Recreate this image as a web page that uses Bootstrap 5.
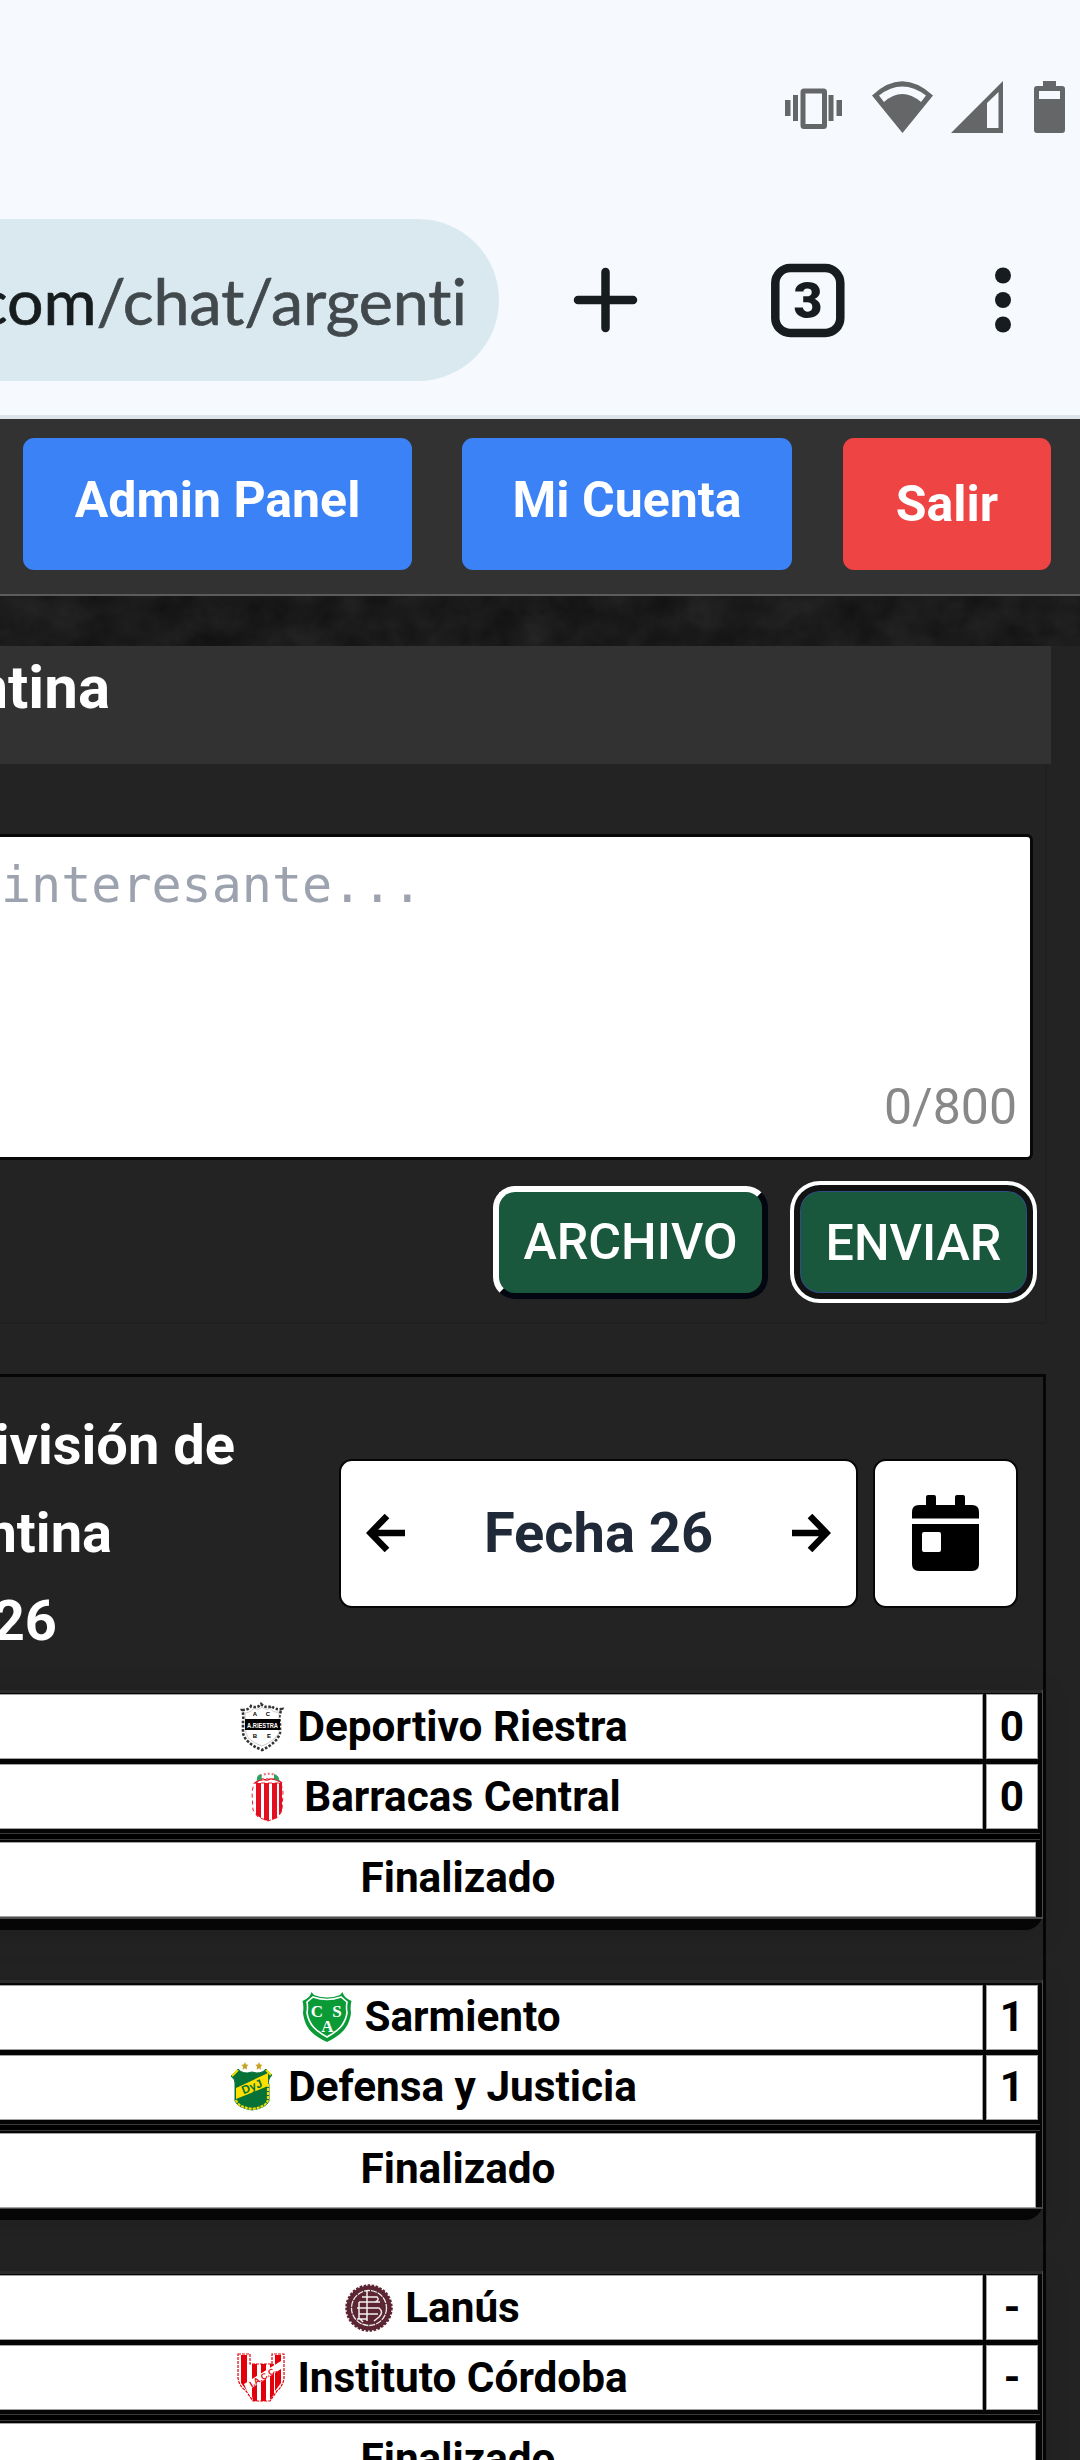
<!DOCTYPE html>
<html lang="es">
<head>
<meta charset="utf-8">
<meta name="viewport" content="width=device-width, initial-scale=1">
<title>Chat Argentina</title>
<link href="https://cdn.jsdelivr.net/npm/bootstrap@5.3.0/dist/css/bootstrap.min.css" rel="stylesheet">
<style>
body{width:1080px;height:2460px;overflow:hidden;background:#232323;font-family:Roboto,"Noto Sans",sans-serif;font-size:50px;line-height:1}
svg{display:block;flex:none}
/* browser chrome */
.chrome{height:418.5px;background:#f6f9fe;border-bottom:4.5px solid #dce3e9}
.status-icons{height:219px;padding:81px 15px 0 0;color:#646667}
.ico-vibrate{margin:7px 30px 0 0}
.ico-wifi{margin-right:18px}
.ico-signal{margin-right:31px}
.toolbar{height:162px}
.omnibox{width:499px;background:#dae8f0;border-radius:0 81px 81px 0}
.url{width:467px;overflow:hidden;white-space:nowrap;font:64.5px/80px Lato,sans-serif;font-variant-ligatures:none;color:#41494d;-webkit-text-stroke:.7px currentColor}
.url span{display:inline-block;margin-left:-38.500px}
.url b{font-weight:400;color:#171c1f}
.ico-plus{margin-left:74px}
.ico-tabs{margin-left:132px}
.ico-more{margin-left:150px}
/* top navigation */
.topnav{height:177px;background:#323232;border-bottom:2px solid #5c5c5c;padding:19.500px 29px 0 23px}
.topnav .btn{height:131.500px;border:0;border-radius:11px;font-size:50px;font-weight:700;line-height:1;color:#fff;padding:0}
.topnav .btn-panel,.topnav .btn-cuenta{background:#3b82f6;padding-bottom:8px}
.btn-panel{width:389px}
.btn-cuenta{width:330px;margin-left:50px}
.topnav .btn-salir{width:208px;margin-left:51px;background:#ef4444}
.texture{height:49.500px;background:#1a1a1a}
.clip{display:flex;justify-content:flex-end;white-space:nowrap;overflow:hidden}
.chat-title{width:1051px;height:119px;background:#323232;color:#fff;font-size:60px;font-weight:700;line-height:86px}
.chat-title .clip{width:110px}
/* composer */
.composer{width:1047px;height:560px;padding-top:70px;border-right:2px solid #202020;border-bottom:2px solid #1f1f1f}
.editor{width:1033px;height:326px;background:#fff;border:3px solid #080808;border-left:0;border-radius:0 6px 6px 0}
.editor .ph{font-family:"DejaVu Sans Mono",monospace;font-size:50px;line-height:60px;color:#9ca3af;padding-top:18px;margin-left:1px;white-space:nowrap}
.editor .count{color:#888;font-size:50px;line-height:60px;padding:0 13px 20px 0}
.actions{padding:21px 8px 0 0}
.actions .btn{background:#19583d;color:#fff;font-size:50.200px;font-weight:500;line-height:1;padding:0;white-space:nowrap}
.actions .btn-archivo{width:275px;height:113px;border:6px solid;border-color:#fff #030712 #030712 #fff;border-radius:22px;margin:5px 22px 0 0}
.actions .btn-enviar{width:247px;height:122px;border:4px solid #fff;border-radius:30px;box-shadow:inset 0 0 0 6px #121212,inset 0 0 0 7px #2e4f86;padding-top:2px}
/* fixtures */
.fixtures{width:1046px;height:1100px;margin-top:50px;border:3px solid #060606;border-left:0;border-bottom:0}
.fix-head{height:312.500px;padding-right:25px}
.fix-title{width:339px;color:#fff;font-size:56px;font-weight:700;line-height:88px}
.line-a{width:235px}
.line-b{width:112px}
.line-c{width:57px}
.box-white{height:149px;background:#fff;border:2px solid #060606;border-radius:13px}
.box-round{width:519px;padding:0 25px;color:#1f2937;font-size:56px;font-weight:700}
.box-cal{width:145px;margin-left:15px}
.match{width:1163px;margin-left:-120px;margin-bottom:50.500px;height:240px;background:#060606;border-radius:0 0 18px 0;color:#000;font-size:42.300px;font-weight:700;line-height:46px;box-shadow:0 5px 30px rgba(0,0,0,.13)}
.match-grid{height:229px;padding:2px 2px 0 0;border:1px solid #4c4c4c;border-width:0 1px 2px 0;background:#050505;box-shadow:inset 0 4px 0 -1px #2b2b2b}
.team-row{height:65px;margin-bottom:5px;padding-right:2px}
.team-row:first-child{margin-top:2.500px}
.cell{background:#fff;border:1px solid #a2a2a2;display:flex;align-items:center;justify-content:center}
.cell-team{flex:1;gap:12px;margin-right:3px}
.cell-score{width:52px}
.sep{height:7px;background:#000;border:1px solid #3a3a3a;border-width:1px 0;margin-top:-1px}
.cell-state{height:75px;margin:2px 4px 0 0;padding-bottom:3px}
</style>
</head>
<body>
<header class="chrome">
  <div class="status-icons d-flex justify-content-end">
    <svg class="ico-vibrate" width="57" height="41" fill="currentColor"><path d="M0 12h5.500v16H0zM8 7h5v26H8zM43.500 7h5v26h-5zM51.500 12H57v16h-5.500z"/><rect x="18" y="3" width="21.500" height="35.500" rx="1" fill="none" stroke="currentColor" stroke-width="5"/></svg>
    <svg class="ico-wifi" width="61" height="52" fill="currentColor"><path fill-rule="evenodd" d="M0 14.500Q30-14 61 14.500L30.500 52zM7 14.500 12 21Q30 5 49 21L54 14.500Q30-3.500 7 14.500z"/></svg>
    <svg class="ico-signal" width="52" height="52" fill="currentColor"><path fill-rule="evenodd" d="M0 52 52 0V52zM36 22V47H47.500V11z"/></svg>
    <svg width="31" height="52" fill="currentColor"><path fill-rule="evenodd" d="M9 0H22V5H28Q31 5 31 8V49Q31 52 28 52H3Q0 52 0 49V8Q0 5 3 5H9zM5 10V18H26V10z"/></svg>
  </div>
  <div class="toolbar d-flex align-items-center">
    <div class="omnibox h-100 d-flex align-items-center"><div class="url"><span><b>.com</b>/chat/argenti</span></div></div>
    <svg class="ico-plus" width="66" height="66" stroke="#171c1f" stroke-width="8.500" stroke-linecap="round"><path d="M32.500 5V61M5 33H60"/></svg>
    <svg class="ico-tabs" width="74" height="75"><rect x="4.300" y="5" width="65" height="65" rx="15" fill="none" stroke="#171c1f" stroke-width="8.500"/><text x="37" y="55" text-anchor="middle" font-family="Roboto" font-weight="900" font-size="50" fill="#171c1f">3</text></svg>
    <svg class="ico-more" width="16" height="66" fill="#171c1f"><circle cx="8" cy="8.500" r="8"/><circle cx="8" cy="33" r="8"/><circle cx="8" cy="57.500" r="8"/></svg>
  </div>
</header>

<nav class="topnav d-flex">
  <a class="btn btn-panel d-flex align-items-center justify-content-center">Admin Panel</a>
  <a class="btn btn-cuenta d-flex align-items-center justify-content-center">Mi Cuenta</a>
  <a class="btn btn-salir d-flex align-items-center justify-content-center">Salir</a>
</nav>
<div class="texture">
  <svg width="1080" height="50"><filter id="grain" x="0" y="0" width="100%" height="100%" color-interpolation-filters="sRGB"><feTurbulence type="fractalNoise" baseFrequency=".025 .03" numOctaves="4" seed="8"/><feColorMatrix values=".1 0 0 0 .055 .1 0 0 0 .055 .1 0 0 0 .055 0 0 0 0 1"/></filter><rect width="1080" height="50" filter="url(#grain)"/></svg>
</div>

<main>
  <h1 class="chat-title m-0"><span class="clip">ntina</span></h1>
  <section class="composer">
    <div class="editor d-flex flex-column justify-content-between">
      <div class="ph">interesante...</div>
      <div class="count text-end">0/800</div>
    </div>
    <div class="actions d-flex justify-content-end">
      <button class="btn btn-archivo">ARCHIVO</button>
      <button class="btn btn-enviar">ENVIAR</button>
    </div>
  </section>

  <section class="fixtures">
    <div class="fix-head d-flex align-items-center">
      <div class="fix-title">
        <div class="clip line-a">ivisión de</div>
        <div class="clip line-b">ntina</div>
        <div class="clip line-c">26</div>
      </div>
      <div class="box-white box-round d-flex align-items-center justify-content-between">
        <svg width="39" height="38" fill="none" stroke="#000" stroke-width="6.500"><path d="M21 2 4.500 19 21 36M4.500 19H39"/></svg>
        <span>Fecha 26</span>
        <svg width="39" height="38" fill="none" stroke="#000" stroke-width="6.500"><path d="M18 2 34.500 19 18 36M34.500 19H0"/></svg>
      </div>
      <div class="box-white box-cal d-flex align-items-center justify-content-center">
        <svg width="67" height="76"><path fill-rule="evenodd" d="M14 10V2q0-2 2-2h6q2 0 2 2V10H43V2q0-2 2-2h6q2 0 2 2V10H60Q67 10 67 17V23.500H0V17Q0 10 7 10zM0 29H67V69Q67 76 60 76H7Q0 76 0 69zM12 37Q10 37 10 39V55Q10 57 12 57H27Q29 57 29 55V39Q29 37 27 37z"/></svg>
      </div>
    </div>

    <article class="match"><div class="match-grid">
      <div class="team-row d-flex">
        <div class="cell cell-team">
          <svg width="50" height="50" viewBox="0 0 50 50"><path d="M7 8Q14 8 16 4Q22 7 26 2Q31 7 37 4Q39 8 47 7Q43 14 45 20V31Q42 41 27 48Q10 41 8 31V18Q9 13 7 8z" fill="none" stroke="#333" stroke-width="2.600" stroke-dasharray="2.600 1.600"/><path d="M10 11Q17 10 19 6Q23 9 27 5Q31 9 35 6Q38 11 44 10V31Q39 39 27 44Q13 39 11 31z" fill="#fff" stroke="#999" stroke-width=".5"/><path d="M10 17H45V28H10z"/><g font-family="Liberation Sans" font-weight="700" text-anchor="middle"><text x="27.500" y="25.500" font-size="7.500" textLength="31" lengthAdjust="spacingAndGlyphs" fill="#fff">A.RIESTRA</text><text x="20" y="14" font-size="6">A</text><text x="33" y="14" font-size="6">C</text><text x="20" y="36" font-size="6">B</text><text x="34" y="36" font-size="6">E</text></g></svg>
          <span>Deportivo Riestra</span></div>
        <div class="cell cell-score">0</div>
      </div>
      <div class="team-row d-flex">
        <div class="cell cell-team">
          <svg width="50" height="50" viewBox="0 0 50 50"><path d="M12 11H39L41 20 40 39 36 45 26 49 16 45 11 38 10 20z" fill="#fff" stroke="#ec1c2d" stroke-width="1" stroke-dasharray="4 3"/><path d="M14 11h5v35l-5-3zM22 11h5v38l-5-1zM30 11h5v35l-5 2zM37 11h3v28l-3 4z" fill="#e50d20"/><path d="M13 11Q19 6 25 8Q32 5 40 11" fill="none" stroke="#e50d20" stroke-width="1.500"/><path d="M18 4Q26 0 34 3M20 7H31" stroke="#ed6a74" stroke-width="2" stroke-dasharray="2 2" fill="none"/><path d="M19 2Q14 3 15 9L20 7zM32 2Q38 4 37 9L32 7z" fill="#2f9f62"/></svg>
          <span>Barracas Central</span></div>
        <div class="cell cell-score">0</div>
      </div>
      <div class="sep"></div>
      <div class="cell cell-state">Finalizado</div>
    </div></article>

    <article class="match"><div class="match-grid">
      <div class="team-row d-flex">
        <div class="cell cell-team">
          <svg width="50" height="50" viewBox="0 0 50 50"><path d="M9.500 0L12 3Q25 8 38 3L40.500 0Q42 6 49.500 9Q48 14 49 21C47 36 39 43 25 50C10 43 3 36 1 21Q2 14 .5 9Q8 6 9.500 0z" fill="#0a9b37"/><path d="M11 5Q25 10 39 5L45 10Q44 15 45 21C43 33 36 39 25 45C14 39 7 33 5 21Q6 15 5 10z" fill="none" stroke="#fff" stroke-width="1.600"/><g fill="#fff" font-family="Liberation Serif" font-weight="700" text-anchor="middle" font-size="17"><text x="15" y="24.500">C</text><text x="35" y="24.500">S</text><text x="25.500" y="39.500">A</text></g></svg>
          <span>Sarmiento</span></div>
        <div class="cell cell-score">1</div>
      </div>
      <div class="team-row d-flex">
        <div class="cell cell-team">
          <svg width="50" height="50" viewBox="0 0 50 50"><path d="M19 0l1 2.500 2.500.3-1.800 2 .3 3-2-1.500-2.300 1.500.4-3-1.800-2 2.600-.3zM33 0l1 2.500 2.500.3-1.800 2 .3 3-2-1.500-2.300 1.500.4-3-1.800-2 2.600-.3z" fill="#c8a11f"/><path d="M12 7Q17 13 26 10Q35 13 40 7L46 13Q41 18 43 23V39Q40 46 26 48Q12 46 9 39V22Q10 18 5 14z" fill="#067238" stroke="#067238" stroke-width="1"/><path d="M6 14 12 8M40 8 45 13" stroke="#f8dd00" stroke-width="2"/><path d="M10 26 42 11V24L10 37z" fill="#ffdf00"/><path d="M10 38Q12 45 26 47Q40 45 42 38M42 22V38" fill="none" stroke="#f5dc00" stroke-width="2.200" stroke-dasharray="3 1"/><text x="26" y="28.500" text-anchor="middle" transform="rotate(-22 26 25)" font-family="Liberation Sans" font-weight="700" font-size="11.500" fill="#067238">DyJ</text></svg>
          <span>Defensa y Justicia</span></div>
        <div class="cell cell-score">1</div>
      </div>
      <div class="sep"></div>
      <div class="cell cell-state">Finalizado</div>
    </div></article>

    <article class="match"><div class="match-grid">
      <div class="team-row d-flex">
        <div class="cell cell-team">
          <svg width="50" height="50" viewBox="0 0 50 50"><circle cx="26" cy="25" r="22.500" fill="#5b2533" stroke="#5b2533" stroke-width="2.500" stroke-dasharray="2.500 1.500"/><circle cx="26" cy="25" r="17.500" fill="none" stroke="#eee" stroke-width="1.300" stroke-dasharray="6 1"/><path d="M24 8V38M19 14H34Q37 17 32 19M16 19H37M16 31H35M16 19V35L20 39M28 25H36Q41 29 36 34L31 38M14 25H28M14 36H24" fill="none" stroke="#f3eff0" stroke-width="1.500"/></svg>
          <span>Lanús</span></div>
        <div class="cell cell-score">-</div>
      </div>
      <div class="team-row d-flex">
        <div class="cell cell-team">
          <svg width="50" height="50" viewBox="0 0 50 50"><path d="M3 1H15V11H37V1H49V25Q48 33 42 38L35 48H18L11 38Q4 33 3 25z" fill="#fff" stroke="#e3000b" stroke-width="1.200" stroke-dasharray="3 1"/><path d="M6 2h6v36l-6-8zM17 11h5v37h-4l-1-5zM26 11h5v37h-5zM35 11h4v30l-4 6zM40 2h6v28l-6 8z" fill="#e3000b"/><path d="M9 31 46 8V16L12 38z" fill="#fff"/><text x="28" y="27" text-anchor="middle" transform="rotate(-32 28 24)" font-family="Liberation Sans" font-weight="700" font-size="8.500" fill="#e3000b">I.A.C.C.</text></svg>
          <span>Instituto Córdoba</span></div>
        <div class="cell cell-score">-</div>
      </div>
      <div class="sep"></div>
      <div class="cell cell-state">Finalizado</div>
    </div></article>
  </section>
</main>
<script src="https://cdn.jsdelivr.net/npm/bootstrap@5.3.0/dist/js/bootstrap.bundle.min.js"></script>
</body>
</html>
